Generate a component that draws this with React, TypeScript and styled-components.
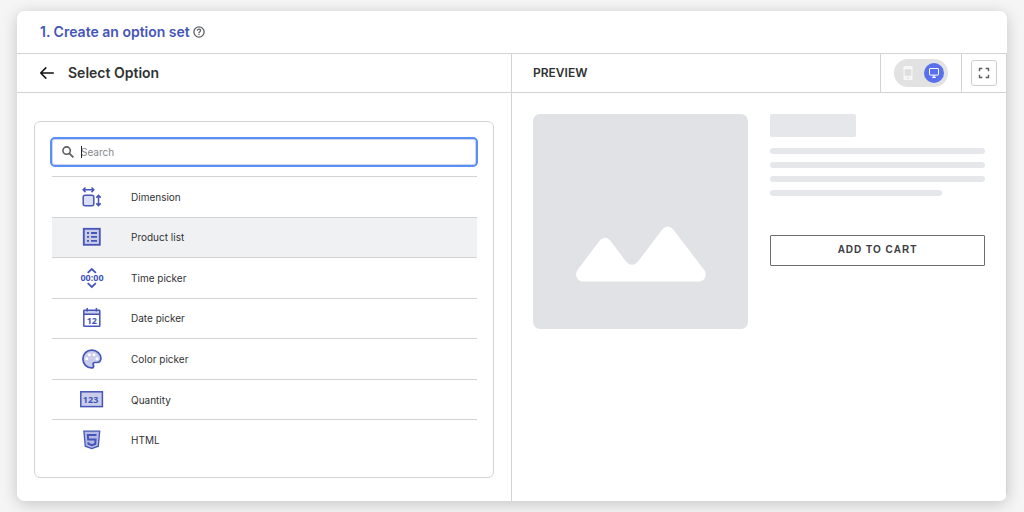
import React from "react";
import styled, { createGlobalStyle } from "styled-components";

const line = "#d2d3d5";
const indigo = "#4555b8";
const tint = "#c9cdea";

const GlobalStyle = createGlobalStyle`
  *, *::before, *::after { box-sizing: border-box; }
  body {
    margin: 0;
    background: #f5f5f5;
    color: #303233;
    font-family: Inter, "Liberation Sans", sans-serif;
  }
  h1, h2, ul, p { margin: 0; padding: 0; }
  button { font: inherit; padding: 0; cursor: pointer; }
  svg { display: block; flex: none; }
`;

const Page = styled.main`
  display: flex;
  min-height: 100vh;
  padding: 11px 17px;
`;

const Card = styled.div`
  flex: 1;
  display: flex;
  flex-direction: column;
  overflow: hidden;
  background: #fff;
  border-radius: 8px;
`;

const CardShadow = styled.div`
  flex: 1;
  display: flex;
  border-radius: 8px;
  box-shadow: 0 3px 16px rgba(0, 0, 0, 0.2);
`;

const TitleBar = styled.header`
  display: flex;
  align-items: center;
  gap: 3px;
  height: 43px;
  padding: 0 23px;
  border-bottom: 1px solid ${line};
`;

const Title = styled.h1`
  color: ${indigo};
  font-size: 14px;
  font-weight: 600;
  line-height: 20px;
`;

const PlainButton = styled.button`
  display: flex;
  border: 0;
  background: none;
  color: ${(p) => p.color || "#111"};
`;

const Columns = styled.div`
  flex: 1;
  display: grid;
  grid-template-columns: 1fr 1fr;
`;

const Pane = styled.section`
  display: flex;
  flex-direction: column;
  min-width: 0;
  border-right: 1px solid ${line};
`;

const PaneHeader = styled.div<{ $inset: number }>`
  display: flex;
  align-items: center;
  height: 39px;
  padding-left: ${(p) => p.$inset}px;
  border-bottom: 1px solid ${line};
`;

const Heading = styled.h2<{ $small?: boolean }>`
  flex: 1;
  font-size: ${(p) => (p.$small ? 12 : 14)}px;
  font-weight: 600;
  line-height: 20px;
  margin-left: ${(p) => (p.$small ? 0 : 13)}px;
`;

const OptionsPanel = styled.div`
  flex: 1;
  display: flex;
  flex-direction: column;
  margin: 28px 17px 23px;
  padding: 15px 15px 17px;
  border: 1px solid ${line};
  border-radius: 6px;
`;

const SearchBox = styled.label`
  position: relative;
  display: flex;
  align-items: center;
  gap: 7px;
  height: 30px;
  padding: 0 10px;
  border: 2px solid #5b8df6;
  border-radius: 5px;
  box-shadow: inset 0 0 0 1px #cfd6e6;
  &::after {
    content: "";
    position: absolute;
    left: 29px;
    top: 7px;
    width: 1px;
    height: 12px;
    background: #222;
  }
`;

const SearchInput = styled.input`
  flex: 1;
  min-width: 0;
  height: 20px;
  padding: 0;
  border: 0;
  outline: 0;
  background: none;
  color: inherit;
  font: 10px/20px Inter, sans-serif;
  &::placeholder { color: #85878a; opacity: 1; }
`;

const OptionList = styled.ul`
  flex: 1;
  display: grid;
  grid-auto-rows: 1fr;
  margin: 9px 1px 0 2px;
  list-style: none;
`;

const OptionItem = styled.li`
  display: flex;
  min-height: 40px;
  border-top: 1px solid ${line};
`;

const OptionButton = styled.button<{ $active?: boolean }>`
  flex: 1;
  display: flex;
  align-items: center;
  gap: 27px;
  padding-left: 28px;
  border: 0;
  background: ${(p) => (p.$active ? "#f0f1f3" : "#fff")};
  color: #303233;
  font-size: 10px;
  line-height: 16px;
`;

const HeaderCell = styled.div<{ $width: number }>`
  display: flex;
  align-items: center;
  justify-content: center;
  align-self: stretch;
  width: ${(p) => p.$width}px;
  border-left: 1px solid ${line};
`;

const DeviceSwitch = styled.div`
  display: flex;
  align-items: center;
  justify-content: space-between;
  width: 54px;
  height: 28px;
  padding: 4px;
  border-radius: 14px;
  background: #e2e2e2;
`;

const DeviceButton = styled.button<{ $on?: boolean }>`
  display: flex;
  align-items: center;
  justify-content: center;
  width: 20px;
  height: 20px;
  border: 0;
  border-radius: 50%;
  background: ${(p) => (p.$on ? "#5870ec" : "transparent")};
`;

const ExpandButton = styled.button`
  display: flex;
  align-items: center;
  justify-content: center;
  width: 26px;
  height: 26px;
  border: 1px solid #cccdd0;
  border-radius: 3px;
  background: #fff;
`;

const Preview = styled.div`
  display: grid;
  grid-template-columns: 1fr 1fr;
  align-items: start;
  gap: 22px;
  padding: 21px;
`;

const Placeholder = styled.svg`
  width: 100%;
  border-radius: 7px;
  background: #e1e2e6;
`;

const Details = styled.div`
  display: flex;
  flex-direction: column;
  gap: 8px;
`;

const SkeletonTitle = styled.div`
  width: 40%;
  height: 23px;
  margin-bottom: 3px;
  border-radius: 2px;
  background: #e6e7eb;
`;

const SkeletonLine = styled.div<{ $short?: boolean }>`
  width: ${(p) => (p.$short ? "80%" : "100%")};
  height: 6px;
  border-radius: 3px;
  background: #e6e7eb;
`;

const CartButton = styled.button`
  height: 31px;
  margin-top: 31px;
  padding-bottom: 2px;
  border: 1px solid #6d6d6f;
  border-radius: 1px;
  background: #fff;
  color: #3c3d3f;
  font: bold 10px/16px "Liberation Sans", sans-serif;
  letter-spacing: 1px;
`;

const Icon = ({ children }: { children: React.ReactNode }) => (
  <svg width="24" height="24" viewBox="0 0 24 24" fill="none" stroke={indigo} strokeWidth="1.5" aria-hidden="true">
    {children}
  </svg>
);

const Digits = ({ x, y, size, children }: { x: number; y: number; size: number; children: string }) => (
  <text x={x} y={y} fontSize={size} fontWeight={700} fontFamily='"Open Sans", sans-serif' textAnchor="middle" fill={indigo} stroke="none">
    {children}
  </text>
);

const options = [
  {
    name: "Dimension",
    icon: (
      <Icon>
        <rect x="3.2" y="10.2" width="10.6" height="10.6" rx="2" fill="#dcdff3" />
        <path d="M3.2 4.8h10.6M5.5 2.5 3.2 4.8l2.3 2.3M11.5 2.5l2.3 2.3-2.3 2.3M18.5 10.4v10.2M16.3 12.6l2.2-2.2 2.2 2.2M16.3 18.4l2.2 2.2 2.2-2.2" />
      </Icon>
    ),
  },
  {
    name: "Product list",
    active: true,
    icon: (
      <Icon>
        <rect x="3.8" y="3.8" width="16" height="16" fill={tint} strokeWidth="1.8" />
        <path d="M7 8h2M11 8h6M7 11.9h2M11 11.9h6M7 15.8h2M11 15.8h6" strokeWidth="1.8" />
      </Icon>
    ),
  },
  {
    name: "Time picker",
    icon: (
      <Icon>
        <path d="m7.7 6.9 4.1-3.8 4.1 3.8M7.7 17.2l4.1 3.8 4.1-3.8" strokeWidth="1.8" />
        <Digits x={12} y={15} size={9}>00:00</Digits>
      </Icon>
    ),
  },
  {
    name: "Date picker",
    icon: (
      <Icon>
        <path d="M3.8 4.3h16v4h-16z" fill={tint} stroke="none" />
        <rect x="3.8" y="4.3" width="16" height="16" rx=".6" />
        <path d="M3.8 8.2h16M7.2 2v3.4M16.4 2v3.4" />
        <Digits x={11.8} y={17.8} size={9}>12</Digits>
      </Icon>
    ),
  },
  {
    name: "Color picker",
    icon: (
      <Icon>
        <path d="M11.8 3.2C6.7 3.2 2.9 7 2.9 12s4 8.9 8.6 8.9c1.3 0 2.1-.8 2.1-2 0-.8-.5-1.2-.5-1.9 0-.9.7-1.5 1.7-1.5h1.9c2.5 0 4.2-1.8 4.2-4.2 0-4.6-4-8.1-9.1-8.1Z" fill={tint} strokeWidth="1.7" />
        <g fill="#fff" stroke="none">
          <circle cx="6.7" cy="11.8" r="1.5" />
          <circle cx="9.4" cy="7.8" r="1.5" />
          <circle cx="14" cy="7.8" r="1.5" />
          <circle cx="17" cy="11.8" r="1.5" />
        </g>
      </Icon>
    ),
  },
  {
    name: "Quantity",
    icon: (
      <Icon>
        <rect x=".8" y="3.8" width="21.6" height="14.8" fill={tint} />
        <Digits x={10.6} y={14.8} size={9}>123</Digits>
      </Icon>
    ),
  },
  {
    name: "HTML",
    icon: (
      <Icon>
        <path d="M3.9 3.2h15.8l-1.4 15-6.5 2.4-6.5-2.4Z" fill="#b4bae5" strokeWidth="1.3" />
        <path d="M16.5 7H7.8l.4 4.4h7.4l-.4 4.5-3.4 1.2-3.4-1.2-.1-1.7" strokeWidth="2" />
      </Icon>
    ),
  },
];

export default function App() {
  return (
    <>
      <GlobalStyle />
      <Page>
        <CardShadow>
          <Card>
            <TitleBar>
              <Title>1. Create an option set</Title>
              <PlainButton color="#5c5f62" aria-label="Help">
                <svg width="12" height="12" viewBox="0 0 12 12" fill="none" stroke="currentColor" strokeWidth="1.3">
                  <circle cx="6" cy="6" r="5.1" />
                  <path d="M4.4 4.8C4.4 3.8 5.1 3.2 6 3.2s1.6.6 1.6 1.4c0 1.1-1.6 1.2-1.6 2.4M6 7.8v1.3" />
                </svg>
              </PlainButton>
            </TitleBar>
            <Columns>
              <Pane>
                <PaneHeader $inset={22}>
                  <PlainButton aria-label="Back">
                    <svg width="16" height="16" viewBox="0 0 16 16" fill="none" stroke="currentColor" strokeWidth="1.5" strokeLinecap="round" strokeLinejoin="round">
                      <path d="M14.3 8H1.7M6.8 2.9 1.7 8l5.1 5.1" />
                    </svg>
                  </PlainButton>
                  <Heading>Select Option</Heading>
                </PaneHeader>
                <OptionsPanel>
                  <SearchBox>
                    <svg width="12" height="12" viewBox="0 0 12 12" fill="none" stroke="#5c5f62" strokeWidth="1.6" aria-hidden="true">
                      <circle cx="4.6" cy="4.6" r="3.7" />
                      <path d="m7.3 7.3 4.1 4.1" strokeWidth="1.8" />
                    </svg>
                    <SearchInput type="text" placeholder="Search" aria-label="Search" />
                  </SearchBox>
                  <OptionList>
                    {options.map((o) => (
                      <OptionItem key={o.name}>
                        <OptionButton $active={o.active}>
                          {o.icon}
                          {o.name}
                        </OptionButton>
                      </OptionItem>
                    ))}
                  </OptionList>
                </OptionsPanel>
              </Pane>
              <Pane>
                <PaneHeader $inset={21}>
                  <Heading $small>PREVIEW</Heading>
                  <HeaderCell $width={81}>
                    <DeviceSwitch>
                      <DeviceButton aria-label="Mobile preview">
                        <svg width="10" height="14" viewBox="0 0 10 14">
                          <rect x=".5" width="9" height="14" rx="1.2" fill="#f7f7f7" />
                          <path d="M1.7 3.3h6.6v6.4H1.7zM3.7 11.4h2.6v1H3.7z" fill="#dedede" />
                        </svg>
                      </DeviceButton>
                      <DeviceButton $on aria-label="Desktop preview">
                        <svg width="10" height="10" viewBox="0 0 10 10" fill="none" stroke="#fff">
                          <rect x=".5" y=".5" width="9" height="6.6" rx=".5" />
                          <path d="M5 7v2M3.2 9.3h3.6" strokeWidth="1.3" />
                        </svg>
                      </DeviceButton>
                    </DeviceSwitch>
                  </HeaderCell>
                  <HeaderCell $width={45}>
                    <ExpandButton aria-label="Full screen">
                      <svg width="12" height="12" viewBox="0 0 12 12" fill="none" stroke="#5c5f62" strokeWidth="1.4">
                        <path d="M1.5 4.3V1.5h2.8M7.7 1.5h2.8v2.8M10.5 7.7v2.8H7.7M4.3 10.5H1.5V7.7" />
                      </svg>
                    </ExpandButton>
                  </HeaderCell>
                </PaneHeader>
                <Preview>
                  <Placeholder viewBox="0 0 215 215" role="img" aria-label="Product image">
                    <path
                      fill="#fff"
                      d="M50.5 167.5C43.5 167.5 41.5 160.5 44.5 156L66 127.5Q72 120 78 127.5L93 147.5Q99 154.5 105 147.5L128.500 116.5Q134.7 108.5 141 116.5L171.2 156C174.5 160.5 172 167.5 165.5 167.5Z"
                    />
                  </Placeholder>
                  <Details>
                    <SkeletonTitle />
                    <SkeletonLine />
                    <SkeletonLine />
                    <SkeletonLine />
                    <SkeletonLine $short />
                    <CartButton>ADD TO CART</CartButton>
                  </Details>
                </Preview>
              </Pane>
            </Columns>
          </Card>
        </CardShadow>
      </Page>
    </>
  );
}
